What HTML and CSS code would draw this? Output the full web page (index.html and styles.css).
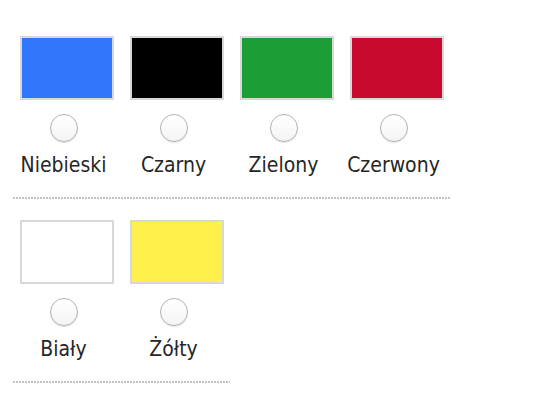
FILE: index.html
```html
<!DOCTYPE html>
<html lang="pl">
<head>
<meta charset="utf-8">
<title>Kolory</title>
<link rel="stylesheet" href="styles.css">
</head>
<body>
<form class="palette">
  <ul class="row">
    <li class="item">
      <label class="choice">
        <span class="swatch swatch-blue"></span>
        <input class="radio" type="radio" name="color" value="niebieski">
        <span class="name">Niebieski</span>
      </label>
    </li>
    <li class="item">
      <label class="choice">
        <span class="swatch swatch-black"></span>
        <input class="radio" type="radio" name="color" value="czarny">
        <span class="name">Czarny</span>
      </label>
    </li>
    <li class="item">
      <label class="choice">
        <span class="swatch swatch-green"></span>
        <input class="radio" type="radio" name="color" value="zielony">
        <span class="name">Zielony</span>
      </label>
    </li>
    <li class="item">
      <label class="choice">
        <span class="swatch swatch-red"></span>
        <input class="radio" type="radio" name="color" value="czerwony">
        <span class="name">Czerwony</span>
      </label>
    </li>
  </ul>
  <ul class="row">
    <li class="item">
      <label class="choice">
        <span class="swatch swatch-white"></span>
        <input class="radio" type="radio" name="color" value="bialy">
        <span class="name">Biały</span>
      </label>
    </li>
    <li class="item">
      <label class="choice">
        <span class="swatch swatch-yellow"></span>
        <input class="radio" type="radio" name="color" value="zolty">
        <span class="name">Żółty</span>
      </label>
    </li>
  </ul>
</form>
</body>
</html>
```
FILE: styles.css
```css
html, body {
  margin: 0;
  padding: 0;
  background: #ffffff;
}

body {
  font-family: "DejaVu Sans Condensed", "DejaVu Sans", sans-serif;
  font-stretch: condensed;
  color: #262626;
}

.palette {
  margin: 0;
  padding: 36px 0 0 13px;
}

.row {
  list-style: none;
  margin: 0 0 21px 0;
  padding: 0 0 22px 0;
  display: flex;
  gap: 3px;
  width: max-content;
  background-image: repeating-linear-gradient(to right, #c2c2c2 0 2px, transparent 2px 3px);
  background-position: left bottom;
  background-size: 100% 2px;
  background-repeat: no-repeat;
}

.item {
  width: 107px;
}

.choice {
  display: flex;
  flex-direction: column;
  align-items: center;
  cursor: pointer;
}

.swatch {
  display: block;
  width: 90px;
  height: 60px;
  border: 2px solid #d8d8d8;
}

.swatch-blue { background: #3077fe; }
.swatch-black { background: #000000; }
.swatch-green { background: #1b9e35; }
.swatch-red { background: #c80a2e; }
.swatch-white { background: #ffffff; }
.swatch-yellow { background: #fff04b; }

.radio {
  appearance: none;
  -webkit-appearance: none;
  box-sizing: border-box;
  width: 28px;
  height: 28px;
  margin: 14px 6px 0 0;
  border-radius: 50%;
  border: 1px solid #b3b3b3;
  background: linear-gradient(#ffffff, #f4f4f4);
  box-shadow: 0 1px 1px rgba(0, 0, 0, 0.12);
}

.name {
  display: block;
  margin: 11px 6px 0 0;
  font-size: 21px;
  line-height: 24px;
  white-space: nowrap;
}
```
